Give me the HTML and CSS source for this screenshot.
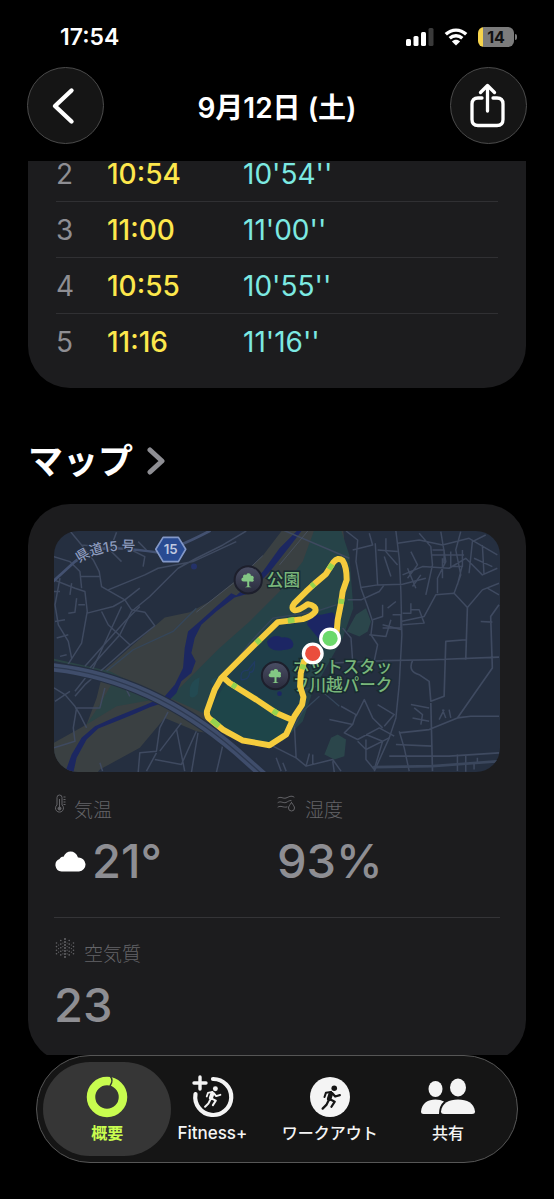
FILE: index.html
```html
<!DOCTYPE html>
<html lang="ja">

<head>
    <meta charset="UTF-8">
    <meta name="viewport" content="width=device-width, initial-scale=1.0">
    <title>フィットネス</title>
    <link rel="stylesheet" href="styles.css">
</head>

<body>
    <div class="status">
        <span class="time">17:54</span>
        <div class="status-icons">
            <svg class="signal" viewBox="0 0 28 18">
                <rect x="0" y="11" width="5" height="7" rx="1.5" fill="#fff" />
                <rect x="7.5" y="8" width="5" height="10" rx="1.5" fill="#fff" />
                <rect x="15" y="4" width="5" height="14" rx="1.5" fill="#fff" />
                <rect x="22.5" y="0" width="5" height="18" rx="1.5" fill="#3a3a3a" />
            </svg>
            <svg class="wifi" viewBox="0 0 24 18">
                <path d="M1.8 6.3C7.600 .6 16.400 .6 22.200 6.300M5.700 10.300c3.600-3.400 9-3.400 12.600 0" fill="none" stroke="#fff" stroke-width="3.300" />
                <path d="M12 17.500L7.900 13.400c2.300-2.100 5.900-2.100 8.200 0z" fill="#fff" />
            </svg>
            <div class="battery"><span>14</span></div>
        </div>
    </div>

    <header class="header">
        <button class="round" aria-label="戻る">
            <svg viewBox="0 0 40 46">
                <path d="M25.500 7.500L9 23l16.500 15.500" fill="none" stroke="#fff" stroke-width="4.400" stroke-linecap="round" stroke-linejoin="round" />
            </svg>
        </button>
        <h1>9月12日 (土)</h1>
        <button class="round" aria-label="共有">
            <svg viewBox="0 0 40 46">
                <path d="M13 15h-4q-6 0-6 6v15.500q0 6 6 6h19q6 0 6-6V21q0-6-6-6h-4" fill="none" stroke="#fff" stroke-width="3.300" stroke-linecap="round" />
                <path d="M18.500 28V3M11.500 9.500l7-7 7 7" fill="none" stroke="#fff" stroke-width="3.300" stroke-linecap="round" stroke-linejoin="round" />
            </svg>
        </button>
    </header>

    <main>
        <section class="card splits">
            <table>
                <tr><td class="num">2</td><td class="lap">10:54</td><td class="pace">10'54''</td></tr>
                <tr><td class="num">3</td><td class="lap">11:00</td><td class="pace">11'00''</td></tr>
                <tr><td class="num">4</td><td class="lap">10:55</td><td class="pace">10'55''</td></tr>
                <tr><td class="num">5</td><td class="lap">11:16</td><td class="pace">11'16''</td></tr>
            </table>
        </section>

        <h2><a href="#map">マップ
            <svg class="chevron" viewBox="0 0 18 28"><path d="M3 3l12 11L3 25" fill="none" stroke="#8e8e93" stroke-width="5" stroke-linecap="round" stroke-linejoin="round" /></svg>
        </a></h2>

        <section class="card detail" id="map">
            <svg class="map" viewBox="12 18 1341 726">
                <defs>
                    <linearGradient id="pin" x1="0" y1="0" x2="0" y2="1">
                        <stop offset="0" stop-color="#4a4e64" />
                        <stop offset="1" stop-color="#292b3c" />
                    </linearGradient>
                    <path id="road15" d="M88 115Q150 66 285 80" />
                    <g id="tree">
                        <circle r="41" fill="url(#pin)" stroke="#1d1f2c" stroke-width="6" />
                        <path d="M-3 5h-11c-8 0-9-11-1-12-3-8 5-12 9-8 4-8 15-5 14 3 8-1 11 6 7 10 5 5-2 9-6 7H3v14l7 3H-10l7-3z" fill="#83c784" />
                    </g>
                </defs>
                <rect width="1400" height="780" fill="#252f40" />

                <!-- river banks and park -->
                <path d="M710 0L640 92 560 165 480 230 420 262 345 278 250 360 160 440 140 520 110 600 12 655V760H130L150 735 270 670 345 580 440 620 560 640 800 400 890 100 880 0z" fill="#3a4042" />
                <path d="M800 0L760 110 690 200 600 290 510 370 440 440 360 520 470 570 580 650 700 650 760 590 790 500 880 340 912 250 900 90 870 0z" fill="#264348" />
                <path d="M12 408L150 440 190 470 150 540 110 600 200 545 340 520 180 440 12 402z" fill="#2b4345" />
                <path d="M690 290L520 455 470 575 560 640 670 660 745 575 760 470 860 330 870 240 740 285z" fill="#1f3e49" />
                <path d="M500 520L540 460 735 585 700 645 650 662 560 630 475 575z" fill="#1e4549" />
                <path d="M892 320L920 270 950 250 965 290 955 320 930 335zM825 690l20-50 20-10 25 15-5 50-30 10z" fill="#2b464b" />
                <path d="M420 500q0-30 30-42l-6 50q-15 18-24 6zM480 470l20-12-5 30z" fill="#234a52" />

                <!-- water -->
                <path d="M770 0L720 65 665 135 600 205 555 218 500 260 455 300 435 340 425 385 438 410 425 445 395 470 380 505 355 530 300 548 250 570 200 590 145 612 110 645 80 700 70 745H45L65 690 95 640 135 605 190 580 240 560 290 540 345 515 375 480 400 430 405 370 415 320 450 290 500 245 545 205 560 212 640 140 690 70 750 10z" fill="#1c2761" />
                <path d="M773 300Q775 265 815 270L850 262 870 290 860 345 815 350zM652 350q20-25 45-12 30-4 35 20 0 18-30 18-45 8-50-26z" fill="#1c2664" />
                <circle cx="433" cy="125" r="9" fill="#243269" /><circle cx="690" cy="507" r="7" fill="#1c2664" />
                <path d="M575 465q-5-30 20-28 15-20 20-25 0 35-15 30 0 25-25 23z" fill="none" stroke="#213b62" stroke-width="4" />

                <!-- side streets -->
                <g fill="none" stroke="#3f4a60" stroke-width="4.500" stroke-linejoin="round">
                    <path d="M60 18L95 60 130 105 148 140 155 185 225 225 245 255 285 262 315 303 240 362 180 415 105 480 75 515M12 165L75 190 105 200 112 260 95 355 60 410 40 440M12 95L60 110 90 140 95 190M30 160L15 240 25 300 55 350 65 400M55 265L75 262 80 220M112 265L190 245 225 225 270 190M155 260L175 300 240 360M200 22L180 75 215 110M95 60L200 70M90 155L148 155M215 245L130 430 75 500M270 245L225 290 105 425" />
                    <path d="M590 18L520 60 440 100 385 130 300 215 245 260 210 330 120 430M560 50L430 110 325 130 285 150 175 195M245 75L285 95 280 125M265 50L290 75M15 290L45 285M20 340L55 330M30 395L50 390M12 200L30 200M65 175L60 210M85 240L105 240" />
                    <path d="M12 490L45 510 75 545 90 570 110 610M15 530L60 500M75 550L150 550 165 490M165 450L220 475 240 515M80 550L70 610 75 650 12 670M355 562L330 610 320 680 270 685 265 745M315 705L395 720 440 620M380 612L405 740M445 625L425 745M520 660L500 745M320 685L290 740M150 715l8 25M395 595L330 680" />
                    <path d="M665 0L900 100M890 18L925 45 920 110 935 190 955 245 970 290 965 330 985 360 975 408M910 75L970 60 960 25M978 55L985 180 935 188M895 225L935 225 990 200 1005 180M880 310L905 340 910 410M1040 18L1050 100 1055 200 1058 330 1050 480 1040 580 1020 640 975 740M985 75L1045 80M985 180L1060 178 1130 160M1000 300L1058 315M1055 290L1125 275 1160 210 1215 205 1255 248 1300 195 1350 175" />
                    <path d="M850 415L1000 408 1150 405 1350 397M1090 408Q1075 440 1110 450L1140 470 1145 530 1185 515 1190 350 1250 345M1255 248L1250 405M1350 240L1325 275 1330 430 1225 580 1265 575 1350 575M1295 290L1330 292M1145 535L1150 740M1050 625L1140 615 1225 580M1020 695L1200 695 1350 685M1040 660L1150 665" stroke-width="5" />
                    <path d="M1045 55L1110 45 1180 60 1260 40 1345 90M1060 150L1120 125 1200 130 1250 100 1300 150 1345 130M1085 80L1105 120 1075 160M1110 25L1145 65 1150 120 1130 210M1175 20L1190 110 1165 160 1165 205M1235 20L1220 75 1235 150 1215 205M1145 90L1245 90M1260 145L1270 50 1310 30M1300 60L1305 150M1010 40L1010 80 1045 120M1075 130L1100 190M1150 75h35v40M1180 100v60M1090 185L1115 150M1205 80v45h35V75M1225 180l15-60M1275 100l55 25M1315 190l35 20M1005 95l20 60M1000 240v35l-30 10M1030 270h25v40h-55M1085 235v30h-25M1015 250l25-20M1085 255h25l15 40-65 5M960 330l50 5 15-50" />
                    <path d="M875 545L920 570 910 600 885 625 925 645 990 610 1035 635M910 600L840 585M920 575L945 525 970 580 1000 610M985 540L1035 570 1005 605M1085 540L1140 550M1090 580L1140 590M1095 550L1120 570 1115 600M950 645L950 705 975 735M925 650L950 675 1020 640M1050 620L1065 670 1080 740M950 630L1000 650 975 735M875 740L850 705 770 725 740 700 670 665M850 710L855 745M735 605L740 700M770 725l10-38M790 720v-30M680 700l15 40M700 715l10 25M1225 690v50M1250 692v50M1170 585l15-30M1190 580l-10-25M1205 580l-5-25M1275 735v-20h10v-15" />
                    <path d="M440 250L370 320 250 375 170 440M520 460L600 355 670 280 800 260 860 240M740 500L800 485 870 545M810 515L760 560 735 605" stroke="#35465a" stroke-width="4" />
                    <path d="M640 92L560 168 440 262M790 0L690 120" stroke="#48505f" stroke-width="3" />
                </g>

                <!-- main roads -->
                <g fill="none" stroke="#435170" stroke-linecap="round">
                    <path d="M0 178L75 110Q130 65 200 70T320 82Q370 75 480 18" stroke-width="8" />
                    <path d="M0 427C230 450 420 560 560 680L650 760" stroke="#252f40" stroke-width="32" />
                    <path d="M0 427C230 450 420 560 560 680L650 760" stroke="#3f4d6b" stroke-width="25" />
                    <path d="M0 427C230 450 420 560 560 680L650 760" stroke="#2d3950" stroke-width="4" />
                    <path d="M975 728L1150 725 1353 710" stroke="#3b475d" stroke-width="8" />
                </g>

                <path d="M340 37h46l22 36-22 37h-46l-22-37z" fill="#294b92" stroke="#8398c7" stroke-width="5" stroke-linejoin="round" />
                <text class="shield" x="363" y="86" text-anchor="middle">15</text>
                <text class="road-name"><textPath href="#road15">県道15 号</textPath></text>

                <use href="#tree" x="596" y="165" />
                <use href="#tree" x="678" y="453" />
                <text class="place" x="652" y="184">公園</text>
                <text class="place" x="730" y="445">ホットスタッ</text>
                <text class="place" x="730" y="500">フ川越パーク</text>

                <!-- workout route -->
                <g transform="translate(390 45)" fill="none" stroke-linecap="round" stroke-linejoin="round">
                    <g stroke="#f5cc3d" stroke-width="18">
                        <path d="M452 296L472 275 475 240 485 190 490 155 502 120Q502 80 490 62 475 50 462 67L440 102 405 132 380 155 345 190Q333 206 345 211 355 215 385 193 412 198 408 214 400 228 370 238L295 247 220 320 125 415 105 450 82 515Q80 530 90 538L130 570 190 603 270 617 320 585 345 530 368 495 372 472 362 440 364 400 374 365 400 341" />
                        <path d="M130 412L150 430 230 480 290 520 335 540" />
                    </g>
                    <g stroke="#96d34d" stroke-width="17" stroke-linecap="butt">
                        <path d="M345 240L325 243M230 310L242 299M96 541L118 560M158 434L170 442M280 513L294 522M368 389L372 374M485 192L487 177M459 73L449 88M405 132L396 140" />
                    </g>
                    <circle cx="452" cy="296" r="28" fill="#6bd96b" stroke="#fff" stroke-width="10" />
                    <circle cx="400" cy="341" r="28" fill="#ea4e3d" stroke="#fff" stroke-width="10" />
                </g>
            </svg>

            <div class="weather">
                <div class="col">
                    <p class="label">
                        <svg class="thermo" viewBox="0 0 12 20" fill="none" stroke="currentColor">
                            <path d="M3 11V3.500a2.500 2.500 0 0 1 5 0V11a4 4 0 1 1-5 0z" /><path d="M5.500 5v9M9.500 3h2M9.500 5.500h2M9.500 8h2M9.500 10.500h2" /><circle cx="5.500" cy="14.500" r="1.500" fill="currentColor" />
                        </svg>気温
                    </p>
                    <p class="value">
                        <svg class="cloud" viewBox="0 0 31 21"><path d="M7 20.500a6.500 6.500 0 0 1-2-12.500C6 6 8 5.500 9 5.800 12-1.500 21-1 23.500 6.500a7 7 0 0 1 1 14z" fill="#fff" /></svg>21°
                    </p>
                </div>
                <div class="col">
                    <p class="label">
                        <svg class="humid" viewBox="0 0 20 20" fill="none" stroke="currentColor" stroke-linecap="round">
                            <path d="M1 4c3-2 5 1 8 0s5-3 8-1M1 8.500c3-2 5 1 8 0 2-1 3-2 5-2M1 13c3-2 5 1 9 0" /><path d="M14.500 8.500c-2 3-3 4-3 5.500a3 3 0 0 0 6 0c0-1.500-1-2.500-3-5.500z" />
                        </svg>湿度
                    </p>
                    <p class="value">93%</p>
                </div>
            </div>
            <div class="air">
                <p class="label">
                    <svg class="dots" viewBox="0 0 20 20" fill="none" stroke="currentColor" stroke-width="1.600" stroke-linecap="round">
                        <path d="M1.500 5v11M5.800 2.500v16M14.200 2.500v16M18.500 5v11" stroke-dasharray="0 3.600" />
                        <path d="M10 1v19" stroke-width="2" stroke-dasharray="0 3" />
                        <path d="M3.600 7v8M7.900 5v11M12.100 5v11M16.400 7v8" stroke-width="1.200" stroke-dasharray="0 3.600" />
                    </svg>空気質
                </p>
                <p class="value">23</p>
            </div>
        </section>
    </main>

    <svg class="symbols" width="0" height="0">
        <symbol id="runner" viewBox="0 0 28 28">
            <circle cx="17.500" cy="4.500" r="3" fill="currentColor" />
            <path d="M7 14l1.500-4.500 5.500-1" fill="none" stroke="currentColor" stroke-width="2.200" stroke-linecap="round" stroke-linejoin="round" />
            <path d="M13.800 10.500L12 16" fill="none" stroke="currentColor" stroke-width="5" stroke-linecap="round" />
            <path d="M15.500 10l3 3.500 5-1.500M13 16.500l5 2.500-3.500 5.500M11 18.500l-2 4-4 4" fill="none" stroke="currentColor" stroke-width="2.400" stroke-linecap="round" stroke-linejoin="round" />
        </symbol>
    </svg>

    <nav class="tabs">
        <a class="tab active" href="#summary">
            <svg viewBox="0 0 56 44">
                <circle cx="28" cy="22" r="16" fill="none" stroke="#c8fc4f" stroke-width="8.500" />
                <path d="M31 1q4 4 0 10" fill="none" stroke="#363636" stroke-width="1.500" />
            </svg>
            概要
        </a>
        <a class="tab latin" href="#fitness">
            <svg viewBox="0 0 56 44">
                <path d="M28 4A18 18 0 1 1 10.500 19" transform="translate(1 0)" fill="none" stroke="#f4f4f4" stroke-width="4.200" stroke-linecap="round" />
                <path d="M16 2v12M10 8h12" fill="none" stroke="#f4f4f4" stroke-width="3.400" stroke-linecap="round" />
                <use href="#runner" x="17" y="10" width="23" height="23" />
            </svg>
            Fitness+
        </a>
        <a class="tab" href="#workout">
            <svg viewBox="0 0 56 44">
                <circle cx="28" cy="22" r="20" fill="#f4f4f4" />
                <use class="dark" href="#runner" x="16" y="9" width="26" height="26" />
            </svg>
            ワークアウト
        </a>
        <a class="tab" href="#sharing">
            <svg viewBox="0 0 56 44" fill="#f4f4f4">
                <ellipse cx="15.500" cy="14" rx="7" ry="8" />
                <path d="M3.500 39Q1 39 1 36.500C2 28 8 24.500 15.500 24.500q5 0 8.500 2-5 4-5 12.500z" />
                <ellipse cx="38" cy="12.500" rx="8" ry="9" />
                <path d="M24 39q-3 0-3-2.500C22 28 29 24.500 38 24.500S54 28 55 36.500Q55 39 52 39z" />
            </svg>
            共有
        </a>
    </nav>
</body>

</html>
```
FILE: styles.css
```css
* {
    margin: 0;
    padding: 0;
    box-sizing: border-box;
}

body {
    background-color: #000;
    color: #fff;
    font-family: Inter, "Noto Sans CJK JP", sans-serif;
    height: 100vh;
    display: flex;
    flex-direction: column;
}

a {
    color: inherit;
    text-decoration: none;
}

.symbols {
    display: none;
}

.status {
    display: flex;
    justify-content: space-between;
    align-items: center;
    height: 67px;
    padding: 7px 36px 0 60px;
}

.time {
    font-size: 23px;
    font-weight: 600;
}

.status-icons {
    display: flex;
    align-items: center;
    gap: 10px;
}

.signal {
    width: 28px;
    height: 18px;
}

.wifi {
    width: 24px;
    height: 18px;
}

.battery {
    position: relative;
    width: 36px;
    height: 20px;
    border-radius: 6px;
    background: linear-gradient(90deg, #f7d44c 5px, #7c7c7c 5px);
    color: #111;
    font-size: 16px;
    font-weight: 700;
    line-height: 20px;
    text-align: center;
    margin-right: 4px;
}

.battery::after {
    content: "";
    position: absolute;
    right: -3px;
    top: 7px;
    width: 2px;
    height: 6px;
    border-radius: 0 2px 2px 0;
    background-color: #7c7c7c;
}

.header {
    display: flex;
    justify-content: space-between;
    align-items: center;
    padding: 0 27px;
    margin-bottom: 9px;
}

.header h1 {
    font-size: 28px;
    font-weight: 600;
}

.round {
    width: 77px;
    height: 77px;
    border: 1px solid #4b4b4b;
    border-radius: 50%;
    background-color: #151515;
    display: flex;
    align-items: center;
    justify-content: center;
    cursor: pointer;
}

.round svg {
    width: 40px;
    height: 46px;
}

main {
    flex: 1;
    overflow: hidden;
    padding: 8px 28px 0;
}

.card {
    background-color: #1c1c1e;
    border-radius: 42px;
}

.splits {
    border-radius: 0 0 42px 42px;
    padding: 0 28px 19px;
}

.splits table {
    width: 100%;
    border-collapse: collapse;
    table-layout: fixed;
    font-size: 28px;
    line-height: 26px;
}

.splits td {
    padding: 15px 0 14px;
    border-bottom: 1px solid #303033;
}

.splits tr:first-child td {
    padding-top: 0;
}

.splits tr:last-child td {
    border-bottom: 0;
}

.num {
    width: 51px;
    color: #8e8e93;
}

.lap {
    width: 136px;
    color: #fde74c;
    font-weight: 500;
}

.pace {
    color: #7ce9e2;
}

h2 {
    font-size: 35px;
    line-height: 50px;
    padding: 48px 0 18px;
}

h2 a {
    display: flex;
    align-items: center;
    gap: 14px;
}

.chevron {
    width: 18px;
    height: 28px;
}

.detail {
    padding: 27px 26px 28px;
}

.map {
    display: block;
    width: 100%;
    border-radius: 24px;
}

.shield {
    font-size: 40px;
    font-weight: 600;
    fill: #c1cae0;
}

.road-name {
    font-size: 41px;
    font-weight: 500;
    fill: #8c9abd;
    stroke: #252f40;
    stroke-width: 6px;
    paint-order: stroke;
}

.place {
    font-size: 50px;
    font-weight: 500;
    fill: #79b57a;
    stroke: #182b30;
    stroke-width: 9px;
    paint-order: stroke;
}

.weather {
    display: grid;
    grid-template-columns: 1fr 1fr;
    padding: 22px 0 27px;
    border-bottom: 1px solid #343437;
}

.air {
    padding-top: 20px;
}

.label {
    display: flex;
    align-items: center;
    gap: 8px;
    height: 28px;
    color: #646468;
    font-size: 19px;
    font-weight: 300;
}

.label svg {
    height: 20px;
    margin-bottom: 8px;
}

.thermo {
    width: 12px;
}

.humid {
    width: 20px;
}

.dots {
    width: 22px;
}

.value {
    display: flex;
    align-items: center;
    gap: 6px;
    margin-top: 10px;
    color: #8e8e93;
    font-size: 47px;
    font-weight: 500;
    line-height: 58px;
}

.cloud {
    width: 32px;
    height: 21px;
}

.tabs {
    display: grid;
    grid-template-columns: 128fr 82fr 152fr 84fr;
    margin: 0 36px 36px;
    padding: 6px 27px 6px 6px;
    border: 1px solid #565656;
    border-radius: 54px;
    background-color: #151515;
}

.tab {
    display: flex;
    flex-direction: column;
    align-items: center;
    height: 94px;
    padding-top: 13px;
    border-radius: 47px;
    color: #f4f4f4;
    font-size: 16px;
    font-weight: 500;
    line-height: 28px;
    white-space: nowrap;
}

.tab svg {
    width: 56px;
    height: 44px;
}

.tab .dark {
    color: #151515;
}

.latin {
    font-size: 17px;
}

.active {
    background-color: #363636;
    color: #c8fc4f;
    font-weight: 700;
}
```
